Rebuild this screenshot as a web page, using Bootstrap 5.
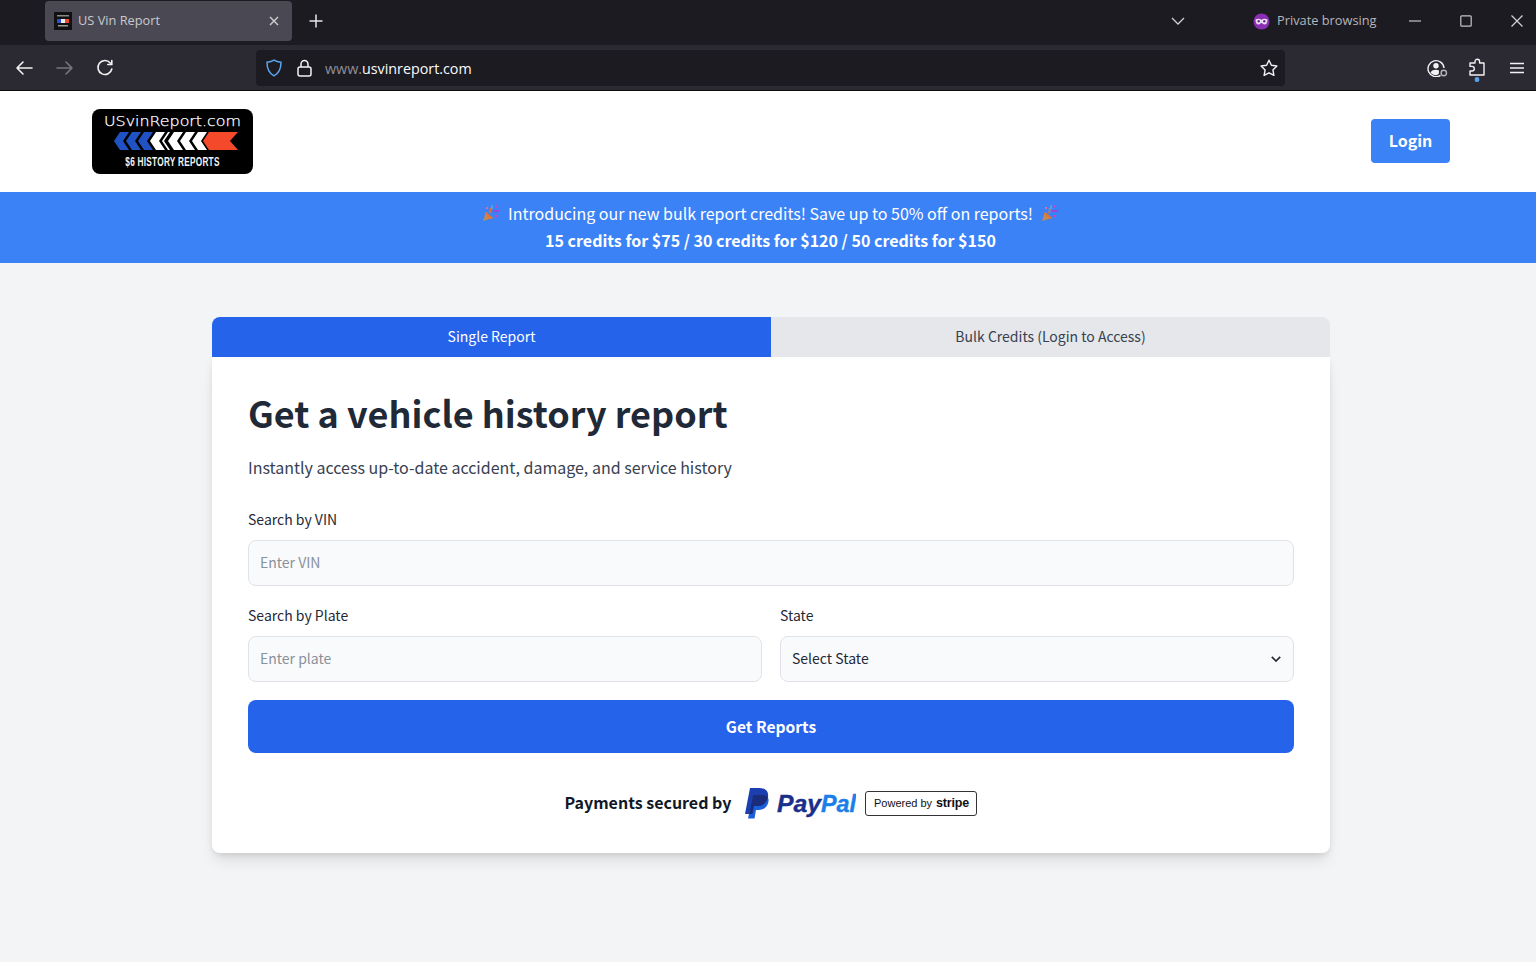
<!DOCTYPE html>
<html lang="en">
<head>
<meta charset="utf-8">
<title>US Vin Report</title>
<link rel="stylesheet" href="https://cdn.jsdelivr.net/npm/bootstrap@5.3.0/dist/css/bootstrap.min.css">
<style>
html,body{height:100%}
body{background:#f3f4f6;font-family:"Noto Sans CJK JP","Liberation Sans",sans-serif;color:#1f2937;overflow:hidden}
svg{display:block}
.ff-strip{height:45px;background:#1c1b22;font-family:"Open Sans","Noto Sans",sans-serif;padding-bottom:3px}
.ff-tab{width:247px;height:40px;margin:0 0 0 45px;background:#4a4953;border-radius:4px;color:#c9c9ce;font-size:12.8px;padding:0 12px 0 9px}
.ff-favicon{width:18px;height:18px;background:#111;margin-right:6px;flex:none}
.ff-plus{width:20px;margin-left:14px}
.ff-list{margin-right:68px}
.ff-private{color:#b5b5ba;font-size:12.8px;width:129px;gap:7px}
.ff-win{width:154px;padding:0 13px 0 27px}
.ff-bar{height:46px;background:#2b2a33;border-bottom:1px solid #0c0c0d;font-family:"Open Sans","Noto Sans",sans-serif;padding-left:15px;padding-right:12px}
.ff-nav{width:241px;gap:22.5px}
.ff-url{width:1029px;height:36px;background:#1c1b22;border-radius:4px;margin-top:1px;padding:0 7px 0 10px;font-size:14.3px;color:#fbfbfe}
.ff-url-text{padding-top:2px}
.ff-url-dim{color:#8f8f95}
.ff-shield{margin-right:15px}
.ff-lock{margin-right:13px}
.ff-tools{gap:21px;margin-left:auto}
.ff-ext{margin-top:-1px}
.ff-dot{top:calc(100% + 1px)}
.site-head{height:101px;background:#fff;padding:18px 86px 0 92px}
.logo-box{width:161px;height:65px}
.btn-login{background:#3b82f6;border:0;color:#fff;font-weight:700;font-size:16px;width:79px;height:44px;border-radius:4px;padding:0 0 2px;margin-top:10px}
.promo{height:71px;background:#3b82f6;color:#fff;font-size:16px;line-height:26.5px;padding:9px 0 0 5px}
.promo-strong{font-weight:700}
.promo-line{gap:8px;height:26.5px;margin-top:-1px}
.tab-one,.tab-two{height:40px;font-size:14px;border:0;flex:1 1 50%;padding:0 0 2px}
.panel-wrap{width:1118px;margin:54px auto 0 212px}
.tab-one{background:#2563eb;color:#fff;border-top-left-radius:8px}
.tab-two{background:#e5e7eb;color:#374151;border-top-right-radius:8px}
.form-panel{background:#fff;height:496px;padding:35px 36px 36px;border-radius:0 0 8px 8px;box-shadow:0 10px 15px -3px rgba(0,0,0,.1),0 4px 6px -2px rgba(0,0,0,.08),0 0 10px rgba(0,0,0,.03)}
.form-title{font-size:36px;font-weight:700;line-height:40px;color:#1f2937;margin:0 0 23px}
.form-sub{font-size:16px;line-height:24px;color:#374151;margin:0 0 30px}
.f-label{font-size:14px;line-height:20px;color:#1f2937;margin:0 0 11px;display:block}
.f-field{height:46px;background-color:#f9fafb;border:1px solid #e0e2e7;border-radius:8px;font-size:14px;padding:0 11px 3px;color:#1f2937}
.f-field::placeholder{color:#8a919c}
.f-field:focus{background-color:#f9fafb}
.form-select.f-field{padding-bottom:1px;background-image:url("data:image/svg+xml,%3csvg xmlns='http://www.w3.org/2000/svg' viewBox='0 0 10 6'%3e%3cpath fill='none' stroke='%23262b36' stroke-width='1.700' d='M.8.8 5 5l4.200-4.200'/%3e%3c/svg%3e");background-position:right 12px center;background-size:10px 6px}
.f-gap{margin-bottom:19px}
.f-row{--bs-gutter-x:18px}
.btn-reports{height:53px;width:100%;background:#2563eb;border:0;color:#fff;font-weight:700;font-size:15.6px;border-radius:8px;margin-top:18px;padding:0}
.secure{margin-top:33px;color:#111827;font-weight:700;font-size:16px;gap:13px;height:34px}
.secure-text{padding-bottom:3px}
.stripe-tag{width:112px;height:25px;border:1px solid #333;border-radius:3px;color:#111;font-family:"Liberation Sans",sans-serif;font-size:11px;font-weight:400;gap:4px;margin-left:-4px}
.stripe-tag b{font-size:12.500px;letter-spacing:-.2px}
</style>
</head>
<body>
<div class="ff-strip d-flex align-items-center">
  <div class="ff-tab d-flex align-items-center">
    <svg class="ff-favicon" viewBox="0 0 18 18"><rect x="3" y="7" width="4" height="4" fill="#2a52c9"/><rect x="7" y="7" width="4" height="4" fill="#eee"/><rect x="11" y="7" width="4" height="4" fill="#f04a2a"/><rect x="3" y="3" width="12" height="1.500" fill="#888"/><rect x="4" y="13" width="10" height="1.500" fill="#999"/></svg>
    <span class="flex-grow-1">US Vin Report</span>
    <svg width="12" height="12" viewBox="0 0 12 12" stroke="#d0d0d4" stroke-width="1.400" fill="none"><path d="M2 2l8 8M10 2l-8 8"/></svg>
  </div>
  <svg class="ff-plus" width="20" height="16" viewBox="0 0 20 16" stroke="#e6e6e9" stroke-width="1.500"><path d="M10 1.500v13M3.500 8h13"/></svg>
  <div class="flex-grow-1"></div>
  <svg class="ff-list" width="14" height="8" viewBox="0 0 14 8" fill="none" stroke="#cfcfd3" stroke-width="1.300"><path d="M1 1l6 6 6-6"/></svg>
  <div class="ff-private d-flex align-items-center">
    <svg width="17" height="17" viewBox="0 0 17 17"><circle cx="8.500" cy="8.500" r="8" fill="#8a2fb3"/><path d="M2.500 6.500c2-1 4-1 6 .3 2-1.300 4-1.300 6-.3 0 3-1 5-3 5-1.500 0-2-1.500-3-1.500s-1.500 1.500-3 1.500c-2 0-3-2-3-5z" fill="#e9dff0"/><circle cx="5.700" cy="8.300" r="1.200" fill="#6c2a8f"/><circle cx="11.300" cy="8.300" r="1.200" fill="#6c2a8f"/></svg>
    <span>Private browsing</span>
  </div>
  <div class="ff-win d-flex justify-content-between align-items-center">
    <svg width="12" height="12" viewBox="0 0 12 12" stroke="#c4c4c8" stroke-width="1.200"><path d="M0 6h12"/></svg>
    <svg width="12" height="12" viewBox="0 0 12 12" stroke="#c4c4c8" stroke-width="1.200" fill="none"><rect x=".8" y=".8" width="10.400" height="10.400" rx="1"/></svg>
    <svg width="12" height="12" viewBox="0 0 12 12" stroke="#d4d4d8" stroke-width="1.200"><path d="M.5.5l11 11M11.500.5l-11 11"/></svg>
  </div>
</div>
<div class="ff-bar d-flex align-items-center">
  <div class="ff-nav d-flex align-items-center">
    <svg width="18" height="16" viewBox="0 0 18 16" fill="none" stroke="#f2f2f4" stroke-width="1.600" stroke-linecap="round" stroke-linejoin="round"><path d="M2 8h15M8 2L2 8l6 6"/></svg>
    <svg width="18" height="16" viewBox="0 0 18 16" fill="none" stroke="#77767e" stroke-width="1.600" stroke-linecap="round" stroke-linejoin="round"><path d="M1 8h15M10 2l6 6-6 6"/></svg>
    <svg width="18" height="18" viewBox="0 0 18 18" fill="none" stroke="#f2f2f4" stroke-width="1.600" stroke-linecap="round"><path d="M15.800 10a7 7 0 1 1-1.500-6M15.800 1.500v4h-4"/></svg>
  </div>
  <div class="ff-url d-flex align-items-center">
    <svg class="ff-shield" width="16" height="18" viewBox="0 0 16 18" fill="none" stroke="#5ba3ec" stroke-width="1.500"><path d="M8 1.200c2 1.300 4 1.800 7 2 0 6-1.500 10.800-7 13.600C2.500 14 1 9.200 1 3.200c3-.2 5-.7 7-2z"/></svg>
    <svg class="ff-lock" width="15" height="18" viewBox="0 0 15 18" fill="none" stroke="#f2f2f4" stroke-width="1.500"><rect x="1" y="8" width="13" height="9" rx="2"/><path d="M4 8V5a3.500 3.500 0 0 1 7 0v3"/></svg>
    <span class="flex-grow-1 ff-url-text"><span class="ff-url-dim">www.</span>usvinreport.com</span>
    <svg width="18" height="18" viewBox="0 0 18 18" fill="none" stroke="#f2f2f4" stroke-width="1.400" stroke-linejoin="round"><path d="M9 1.200l2.400 5.100 5.500.7-4 3.900 1 5.500L9 13.800l-4.900 2.600 1-5.500-4-3.900 5.500-.7z"/></svg>
  </div>
  <div class="ff-tools d-flex align-items-center">
    <svg width="21" height="18" viewBox="0 0 21 18" fill="none" stroke="#f2f2f4" stroke-width="1.400"><path d="M13.500 16.300A8 8 0 1 1 17 9"/><circle cx="9" cy="6.800" r="2.700" fill="#f2f2f4" stroke="none"/><path d="M3.500 13.500c1.200-2 3-2.700 5.500-2.700 1.200 0 2.200.2 3 .6l-.2 3.400c-1 1-2 1.400-2.800 1.400-2.200 0-4-1-5.500-2.700z" fill="#f2f2f4" stroke="none"/><circle cx="16.800" cy="14" r="2.700" stroke="#b5b5ba"/></svg>
    <div class="position-relative ff-ext">
      <svg width="16" height="18" viewBox="0 0 16 18" fill="none" stroke="#f2f2f4" stroke-width="1.400" stroke-linejoin="round"><path d="M1 5h5V3.500a2.300 2.300 0 0 1 4.600 0V5H15v12H1v-4h2a2.300 2.300 0 0 0 0-4.600H1z"/></svg>
      <svg class="position-absolute ff-dot start-50 translate-middle-x" width="5" height="5" viewBox="0 0 5 5"><circle cx="2.500" cy="2.500" r="2.500" fill="#5ba3ec"/></svg>
    </div>
    <svg class="ms-1" width="14" height="12" viewBox="0 0 14 12" stroke="#f2f2f4" stroke-width="1.500"><path d="M0 1.500h14M0 6h14M0 10.500h14"/></svg>
  </div>
</div>

<header class="site-head d-flex justify-content-between align-items-start">
  <svg class="logo-box" viewBox="0 0 161 65">
    <rect width="161" height="65" rx="8" fill="#000"/>
    <text x="80.500" y="17" text-anchor="middle" textLength="137" lengthAdjust="spacingAndGlyphs" font-family="'DejaVu Sans',sans-serif" font-size="14" font-weight="300" fill="#fff" stroke="#fff" stroke-width=".25">USvinReport.com</text>
    <g fill="#2152c4">
      <path d="M28 23h9l-6 9 6 9h-9l-6-9z"/><path d="M40 23h9l-6 9 6 9h-9l-6-9z"/><path d="M52 23h9l-6 9 6 9h-9l-6-9z"/>
    </g>
    <g fill="#fff">
      <path d="M64 23h9l-6 9 6 9h-9l-6-9z"/><path d="M76 23h2l-6 9 6 9h-2l-6-9z"/><path d="M82 23h9l-6 9 6 9h-9l-6-9z"/><path d="M94 23h9l-6 9 6 9h-9l-6-9z"/><path d="M106 23h9l-6 9 6 9h-9l-6-9z"/>
    </g>
    <path d="M117 23h29l-8 9 8 9h-29l-6-9z" fill="#f4492a"/>
    <text transform="translate(80.500 56.500) scale(.66 1)" text-anchor="middle" letter-spacing=".4" font-family="'Liberation Sans',sans-serif" font-size="12.500" font-weight="700" fill="#f4f4f4">$6 HISTORY REPORTS</text>
  </svg>
  <button type="button" class="btn btn-login">Login</button>
</header>

<div class="promo text-center">
  <div class="promo-line d-flex justify-content-center align-items-center">
    <svg width="18" height="18" viewBox="0 0 18 18"><path d="M1 17l3-9 7 6z" fill="#c08a58"/><path d="M4 8l7 6-2.500 1.200L3 10z" fill="#e8732f"/><path d="M7.500 9c1-1 1.500-3 1-5" stroke="#e8732f" stroke-width="1.500" fill="none"/><rect x="9" y="1" width="2" height="4" fill="#4aa3e8"/><rect x="13" y="1.500" width="2" height="2" fill="#d83fb8"/><rect x="11" y="6" width="6" height="2" fill="#9a46d6"/><rect x="13" y="11" width="2" height="2" fill="#d83fb8"/><rect x="4" y="3" width="2" height="2" fill="#d86fa8"/></svg>
    <span>Introducing our new bulk report credits! Save up to 50% off on reports!</span>
    <svg width="18" height="18" viewBox="0 0 18 18"><path d="M1 17l3-9 7 6z" fill="#c08a58"/><path d="M4 8l7 6-2.500 1.200L3 10z" fill="#e8732f"/><path d="M7.500 9c1-1 1.500-3 1-5" stroke="#e8732f" stroke-width="1.500" fill="none"/><rect x="9" y="1" width="2" height="4" fill="#4aa3e8"/><rect x="13" y="1.500" width="2" height="2" fill="#d83fb8"/><rect x="11" y="6" width="6" height="2" fill="#9a46d6"/><rect x="13" y="11" width="2" height="2" fill="#d83fb8"/><rect x="4" y="3" width="2" height="2" fill="#d86fa8"/></svg>
  </div>
  <div class="promo-strong">15 credits for $75 / 30 credits for $120 / 50 credits for $150</div>
</div>

<main class="panel-wrap">
  <div class="d-flex">
    <button type="button" class="tab-one">Single Report</button>
    <button type="button" class="tab-two">Bulk Credits (Login to Access)</button>
  </div>
  <section class="form-panel">
    <h1 class="form-title">Get a vehicle history report</h1>
    <p class="form-sub">Instantly access up-to-date accident, damage, and service history</p>
    <div class="f-gap">
      <label class="f-label" for="vin">Search by VIN</label>
      <input id="vin" class="form-control f-field" placeholder="Enter VIN">
    </div>
    <div class="row f-row">
      <div class="col-6">
        <label class="f-label" for="plate">Search by Plate</label>
        <input id="plate" class="form-control f-field" placeholder="Enter plate">
      </div>
      <div class="col-6">
        <label class="f-label" for="state">State</label>
        <select id="state" class="form-select f-field"><option>Select State</option></select>
      </div>
    </div>
    <button type="button" class="btn btn-reports">Get Reports</button>
    <div class="secure d-flex justify-content-center align-items-center">
      <span class="secure-text">Payments secured by</span>
      <svg width="112" height="32" viewBox="0 0 112 32">
        <path d="M6 1h9c6 0 10 3 9 9-1 6-5 9-10 9H10L8.500 27H1z" fill="#1b3fae"/>
        <path d="M9 8h10c4 0 6 2.500 5.500 6.500C23.500 20 19.500 23 15 23h-3l-1.500 8.500H4z" fill="#1c5fdc"/>
        <path d="M9 8h10c2.300 0 3.900.8 4.800 2.200C22.800 15.800 18.700 19 14 19h-4l-1.500 8H5.200z" fill="#1b2c7a"/>
        <text x="33" y="24.500" font-family="'Liberation Sans',sans-serif" font-size="24" font-weight="700" font-style="italic" fill="#1a2f8a" stroke="#1a2f8a" stroke-width=".4" textLength="44" lengthAdjust="spacingAndGlyphs">Pay</text>
        <text x="77" y="24.500" font-family="'Liberation Sans',sans-serif" font-size="24" font-weight="700" font-style="italic" fill="#1a7fe8" stroke="#1a7fe8" stroke-width=".4" textLength="35" lengthAdjust="spacingAndGlyphs">Pal</text>
      </svg>
      <div class="stripe-tag d-flex align-items-center justify-content-center"><span>Powered by</span><b>stripe</b></div>
    </div>
  </section>
</main>
<script src="https://cdn.jsdelivr.net/npm/bootstrap@5.3.0/dist/js/bootstrap.bundle.min.js"></script>
</body>
</html>
